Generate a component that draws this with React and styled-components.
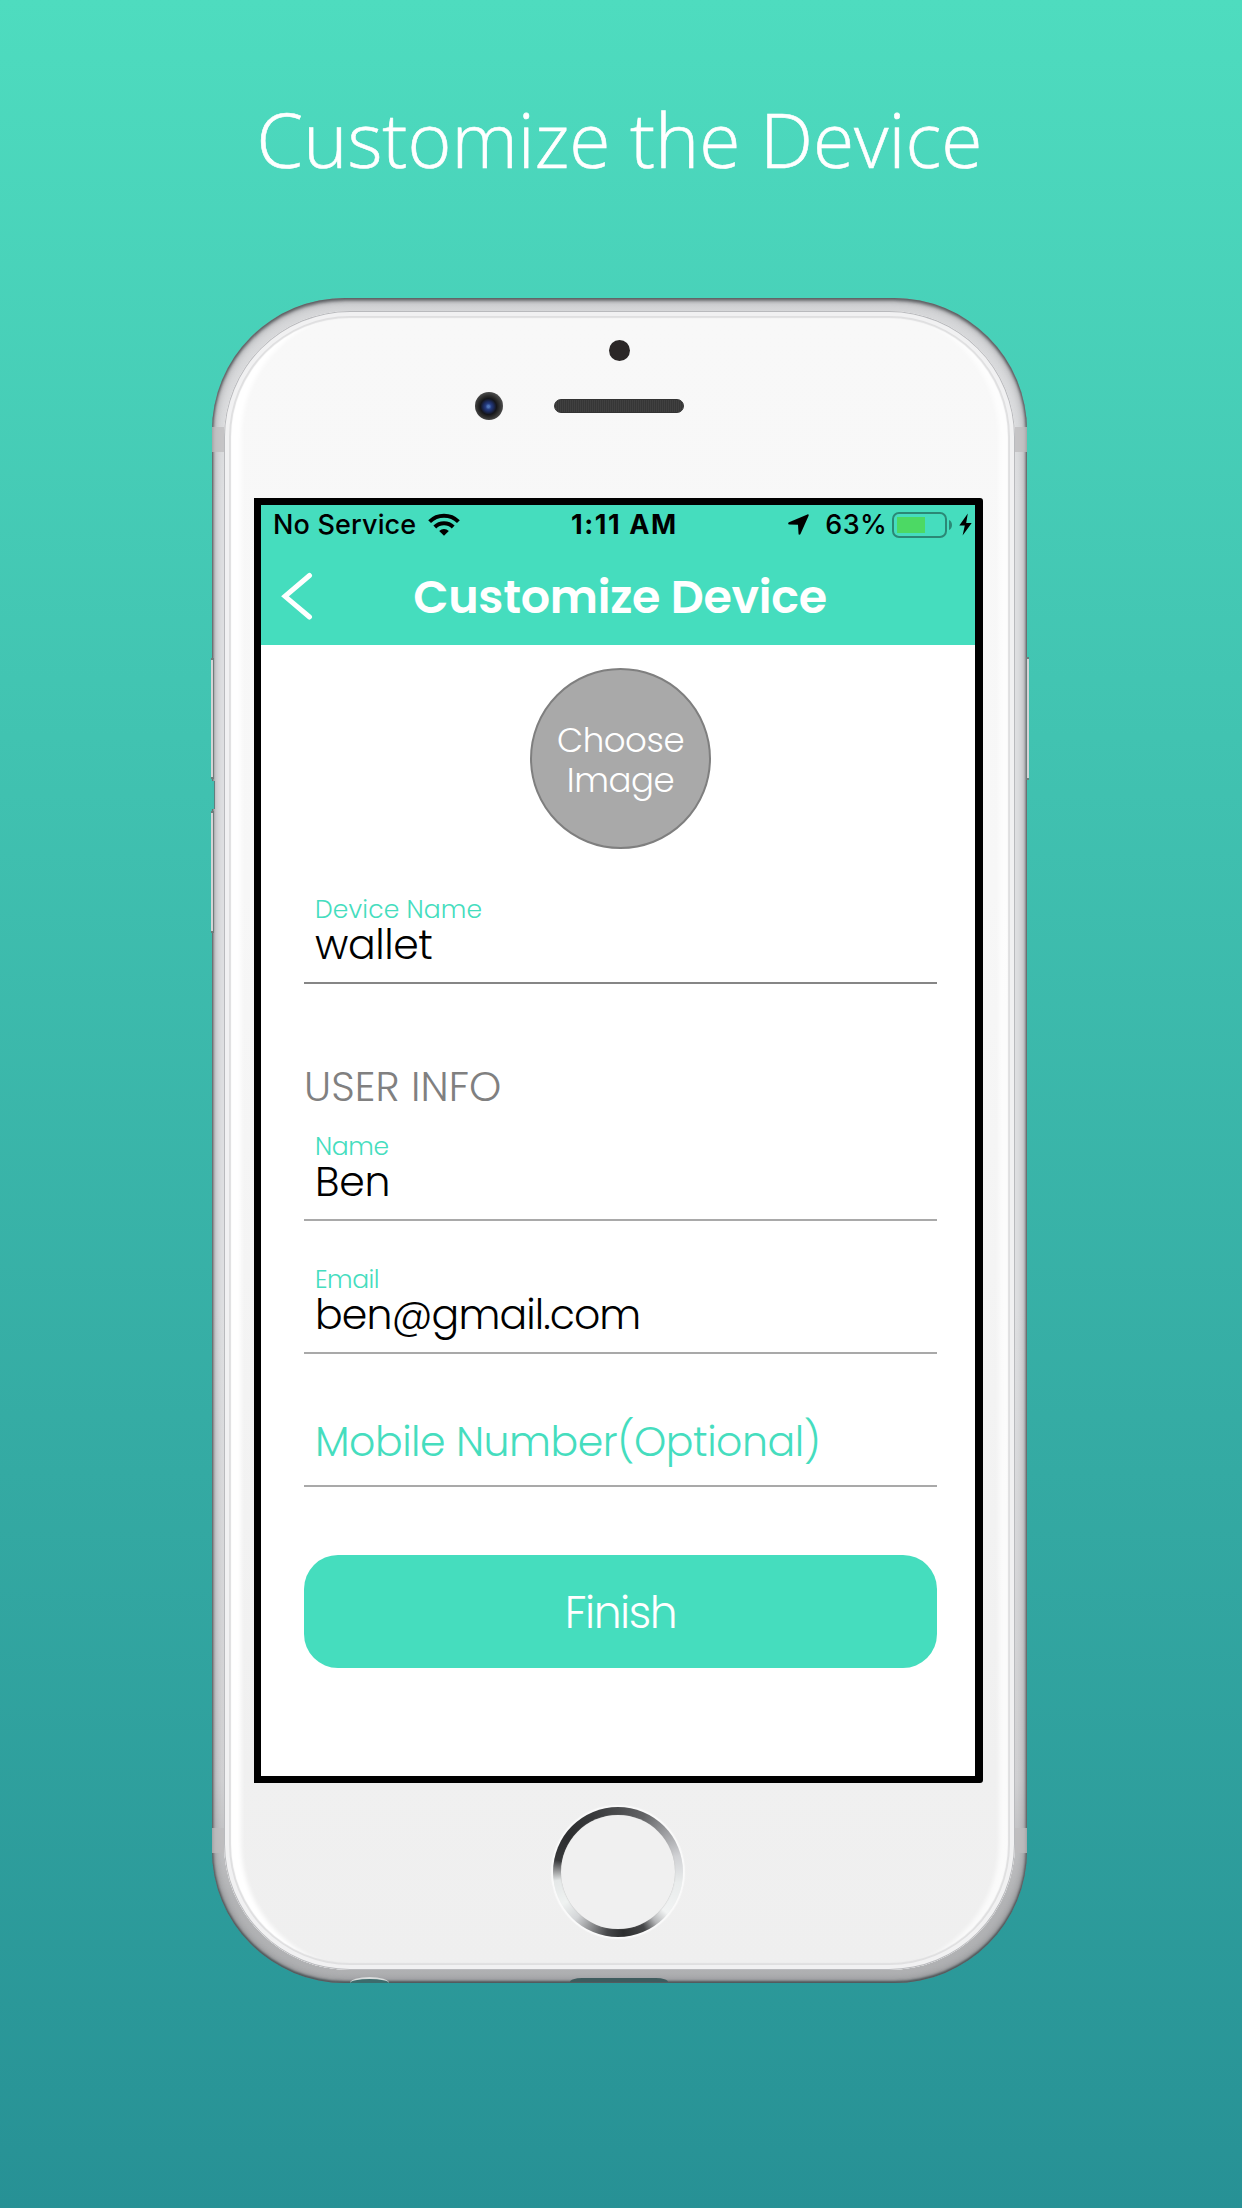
import React from "react";
import styled, { createGlobalStyle } from "styled-components";

const TEAL = "#45ddbe";
const geometric = `Poppins, Lato, "Open Sans", sans-serif`;

const GlobalStyle = createGlobalStyle`
  * { box-sizing: border-box; }
  body { margin: 0; }
`;

const Page = styled.main`
  width: 1242px;
  height: 2208px;
  padding: 89px 3px 0 0;
  display: flex;
  flex-direction: column;
  align-items: center;
  overflow: hidden;
  background: linear-gradient(180deg, #4edcbf 0%, #279195 100%);
`;

const Headline = styled.h1`
  margin: 0 0 109px;
  font: 300 75px/100px "Open Sans", sans-serif;
  -webkit-text-stroke: 0.6px #fff;
  color: #fff;
  white-space: nowrap;
`;

const Rim = styled.section`
  position: relative;
  flex: none;
  width: 815px;
  height: 1685px;
  padding: 13px 12px;
  border-radius: 133px;
  background: linear-gradient(180deg, #d6d7d9 0%, #e0e1e3 12%, #e0e1e3 60%, #d2d2d4 88%, #b4b5b7 95%, #b0b1b3 100%);
  box-shadow:
    inset 0 0 3px 1px rgba(70, 72, 75, 0.75),
    inset 0 0 10px 2px rgba(90, 92, 96, 0.5),
    inset 0 3px 3px rgba(70, 72, 75, 0.5),
    inset 0 -2px 2px rgba(50, 75, 78, 0.6);
`;

const Antenna = styled.i`
  position: absolute;
  width: 12px;
  height: 25px;
  ${(p) => (p.$right ? "right: 0;" : "left: 0;")}
  ${(p) => (p.$bottom ? "bottom: 130px;" : "top: 129px;")}
  background: rgba(190, 188, 190, 0.75);
`;

const SideButton = styled.i`
  position: absolute;
  width: 3px;
  height: ${(p) => p.$height}px;
  top: ${(p) => p.$top}px;
  ${(p) => (p.$right ? "right: -2px;" : "left: -1px;")}
  background: #d3d4d6;
  border: solid #6f7d7c;
  border-width: ${(p) => (p.$right ? "2px 0 2px 1px" : "2px 1px 2px 0")};
`;

const ButtonGap = styled.i`
  position: absolute;
  left: 0;
  top: 483px;
  width: 3px;
  height: 28px;
  background: #3fbfb0;
  border-right: 1px solid #5f7f7e;
`;

const HeadphoneJack = styled.i`
  position: absolute;
  left: 138px;
  bottom: 0;
  width: 39px;
  height: 6px;
  border-radius: 50% 50% 0 0 / 100% 100% 0 0;
  background: #3d6b6c;
  border-top: 2px solid #d9dcdc;
`;

const ChargingPort = styled.i`
  position: absolute;
  left: 358px;
  bottom: 1px;
  width: 98px;
  height: 4px;
  border-radius: 12px 12px 0 0 / 4px 4px 0 0;
  background: #3f5c5e;
`;

const Glass = styled.div`
  height: 100%;
  display: flex;
  flex-direction: column;
  align-items: center;
  border-radius: 126px;
  background: linear-gradient(180deg, #f8f8f8 0%, #f7f7f7 35%, #f0f0f0 88%, #efefef 100%);
  box-shadow:
    inset 0 0 0 1px #b9babd,
    inset 0 0 0 5px #f1f1f2,
    inset 0 0 1px 7px #dfdfe0,
    inset 17px 0 4px 0 #ffffff,
    inset -16px 0 4px 0 rgba(255, 255, 255, 0.7);
`;

const TopBezel = styled.div`
  width: 100%;
  height: 187px;
  padding-top: 29px;
  display: flex;
  flex-direction: column;
  align-items: center;
  gap: 31px;
`;

const Sensor = styled.i`
  width: 21px;
  height: 21px;
  border-radius: 50%;
  background: #2b2727;
`;

const EarRow = styled.div`
  align-self: flex-start;
  padding-left: 251px;
  display: flex;
  align-items: center;
  gap: 51px;
`;

const Camera = styled.i`
  width: 28px;
  height: 28px;
  border-radius: 50%;
  background: radial-gradient(circle at 48% 52%, #4f74b8 0 1px, #253c80 3px, #1c2b5e 5px, #14151b 8px, #262626 10px, #484848 14px);
`;

const Speaker = styled.i`
  width: 130px;
  height: 14px;
  border-radius: 7px;
  border: 1px solid #333;
  background: repeating-linear-gradient(90deg, #363636 0 1px, #404040 1px 2px);
`;

const Screen = styled.div`
  width: 729px;
  height: 1285px;
  margin-right: 2px;
  flex: none;
  display: flex;
  flex-direction: column;
  border: solid #000;
  border-width: 7px 8px 7px 7px;
  border-radius: 0 3px 3px 0;
  background: #fff;
`;

const AppBar = styled.header`
  height: 140px;
  flex: none;
  background: ${TEAL};
`;

const StatusBar = styled.div`
  height: 38px;
  padding: 1px 3px 0 12px;
  display: grid;
  grid-template-columns: 298px 1fr auto;
  align-items: center;
  font: 500 27px/37px Inter, "Liberation Sans", sans-serif;
  color: #000;
  white-space: nowrap;
  svg { display: block; }
`;

const Carrier = styled.div`
  display: flex;
  align-items: center;
  gap: 12px;
  letter-spacing: 0.15px;
`;

const Clock = styled.div`
  font-weight: 700;
  letter-spacing: 1.6px;
`;

const Power = styled.div`
  display: flex;
  align-items: center;
`;

const Percent = styled.span`
  margin: 0 5px 0 16px;
  letter-spacing: 0.3px;
`;

const Battery = styled.div`
  width: 55px;
  height: 26px;
  padding: 3px;
  border: 2px solid #2b8876;
  border-radius: 7px;
`;

const Charge = styled.div`
  width: 63%;
  height: 100%;
  background: #4cd964;
`;

const NavBar = styled.div`
  height: 102px;
  padding: 5px 0 0 4px;
  display: grid;
  grid-template-columns: 1fr auto 1fr;
  align-items: center;
  svg { display: block; margin: -2px 0 0 16px; }
`;

const NavTitle = styled.h2`
  margin: 0;
  font: 600 46px/60px ${geometric};
  letter-spacing: -0.3px;
  color: #fff;
`;

const Form = styled.form`
  padding: 23px 38px 0 43px;
  display: flex;
  flex-direction: column;
`;

const Avatar = styled.div`
  align-self: center;
  width: 181px;
  height: 181px;
  padding-top: 2px;
  border-radius: 50%;
  border: 2px solid #7f7f7f;
  background: #a9a9a9;
  display: flex;
  flex-direction: column;
  align-items: center;
  justify-content: center;
  font: 300 34px/40px ${geometric};
  letter-spacing: -0.45px;
  color: #fff;
`;

const Field = styled.label`
  height: 90px;
  margin-top: ${(p) => p.$gap}px;
  padding-left: 11px;
  display: flex;
  flex-direction: column;
  border-bottom: 2px solid ${(p) => (p.$active ? "#868686" : "#a9a9a9")};
`;

const FieldName = styled.span`
  height: 30px;
  font: 300 25px/32px ${geometric};
  letter-spacing: ${(p) => p.$spacing}px;
  color: ${TEAL};
`;

const FieldValue = styled.span`
  font: 300 41px/42px ${geometric};
  letter-spacing: ${(p) => p.$spacing}px;
  color: #000;
`;

const FieldPrompt = styled.span`
  padding-top: 24px;
  font: 300 41px/42px ${geometric};
  letter-spacing: -0.45px;
  color: ${TEAL};
`;

const SectionTitle = styled.h3`
  margin: 78px 0 0;
  font: 300 41px/50px ${geometric};
  letter-spacing: 0.1px;
  color: #808080;
`;

const Finish = styled.button`
  height: 113px;
  margin-top: 68px;
  padding: 2px 0 0;
  border: 0;
  border-radius: 34px;
  background: ${TEAL};
  font: 300 44px/60px ${geometric};
  letter-spacing: -1.4px;
  color: #fff;
`;

const HomeButton = styled.div`
  width: 130px;
  height: 130px;
  margin: 24px 3px 0 0;
  padding: 8px;
  border-radius: 50%;
  background: conic-gradient(
    #4b4c4e 0deg, #636466 25deg, #9c9da0 50deg, #d0d1d4 75deg, #e9ecec 100deg,
    #f1f3f3 130deg, #b5b6b8 143deg, #454648 155deg, #2c2d2e 175deg, #47484a 190deg,
    #8a8b8d 205deg, #d3d5d7 222deg, #eff2f1 240deg, #e4e7e7 262deg, #a0a1a2 270deg,
    #37383a 281deg, #2c2d2f 305deg, #38393b 335deg, #4b4c4e 360deg
  );
  box-shadow: 0 0 1px 2px #fafafa;
`;

const HomeFace = styled.div`
  height: 100%;
  border-radius: 50%;
  background: #f0f0f0;
  box-shadow: 0 0 1px 0 rgba(170, 170, 170, 0.9);
`;

const WifiIcon = () => (
  <svg width="32" height="23" viewBox="0 0 32 23">
    <g fill="none" stroke="#000" strokeWidth="4">
      <path d="M1.6 8.6a20.5 20.5 0 0 1 28.8 0" />
      <path d="M6.8 14a13 13 0 0 1 18.4 0" />
    </g>
    <path d="M11.2 17.9a7 7 0 0 1 9.6 0L16 22.8z" />
  </svg>
);

const LocationIcon = () => (
  <svg width="21" height="21" viewBox="0 0 21 21">
    <path d="M19.4.4 1 8.3C-.3 8.9 0 10.300 1.200 10.400L10 10.800l.5 8.700C10.600 21 12 21 12.600 19.800L20.600 1.800C21 .7 20.500 0 19.400.4z" />
  </svg>
);

const BoltIcon = () => (
  <svg width="13" height="23" viewBox="0 0 13 23">
    <path d="M8.800.5.3 12.600h5.500L3.600 22.500 12.700 9.900H7.200z" />
  </svg>
);

const BatteryNub = () => (
  <svg width="12" height="10" viewBox="0 0 12 10">
    <path d="M2 0c4 1.500 4 8.500 0 10z" fill="#2b8876" />
  </svg>
);

const BackIcon = () => (
  <svg width="32" height="50" viewBox="0 0 32 50">
    <path d="M28.500 4.500 4 25.300l24.500 20.700" fill="none" stroke="#fff" strokeWidth="5" strokeLinecap="round" strokeLinejoin="miter" />
  </svg>
);

function TextField({ name, value, gap, active, nameSpacing, valueSpacing }) {
  return (
    <Field $gap={gap} $active={active}>
      <FieldName $spacing={nameSpacing}>{name}</FieldName>
      <FieldValue $spacing={valueSpacing}>{value}</FieldValue>
    </Field>
  );
}

export default function App() {
  return (
    <Page>
      <GlobalStyle />
      <Headline>Customize the Device</Headline>
      <Rim>
        <Antenna />
        <Antenna $right />
        <Antenna $bottom />
        <Antenna $right $bottom />
        <ButtonGap />
        <SideButton $top={360} $height={121} />
        <SideButton $top={513} $height={122} />
        <SideButton $right $top={359} $height={123} />
        <HeadphoneJack />
        <ChargingPort />
        <Glass>
          <TopBezel>
            <Sensor />
            <EarRow>
              <Camera />
              <Speaker />
            </EarRow>
          </TopBezel>
          <Screen>
            <AppBar>
              <StatusBar>
                <Carrier>
                  <span>No Service</span>
                  <WifiIcon />
                </Carrier>
                <Clock>1:11 AM</Clock>
                <Power>
                  <LocationIcon />
                  <Percent>63%</Percent>
                  <Battery>
                    <Charge />
                  </Battery>
                  <BatteryNub />
                  <BoltIcon />
                </Power>
              </StatusBar>
              <NavBar>
                <BackIcon />
                <NavTitle>Customize Device</NavTitle>
              </NavBar>
            </AppBar>
            <Form>
              <Avatar>
                <span>Choose</span>
                <span>Image</span>
              </Avatar>
              <TextField name="Device Name" value="wallet" gap={45} active nameSpacing={0.15} valueSpacing={-0.4} />
              <SectionTitle>USER INFO</SectionTitle>
              <TextField name="Name" value="Ben" gap={19} nameSpacing={-0.4} valueSpacing={-0.2} />
              <TextField name="Email" value="ben@gmail.com" gap={43} nameSpacing={-0.5} valueSpacing={-0.9} />
              <Field $gap={43}>
                <FieldPrompt>Mobile Number(Optional)</FieldPrompt>
              </Field>
              <Finish type="button">Finish</Finish>
            </Form>
          </Screen>
          <HomeButton>
            <HomeFace />
          </HomeButton>
        </Glass>
      </Rim>
    </Page>
  );
}
